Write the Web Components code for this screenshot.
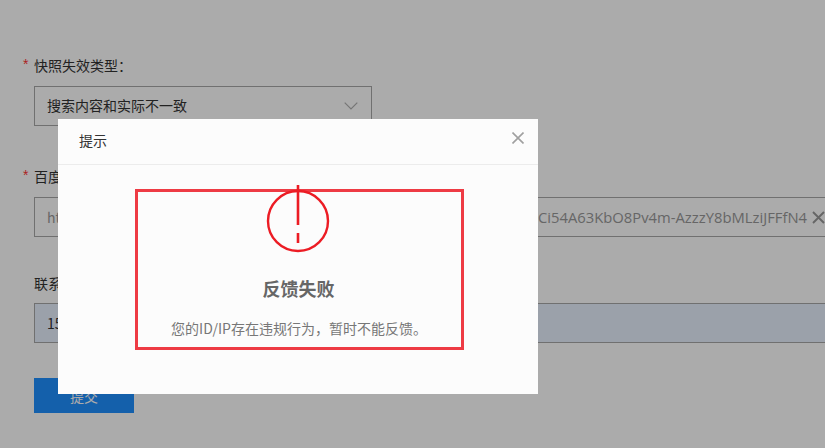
<!DOCTYPE html>
<html lang="zh-CN">
<head>
<meta charset="utf-8">
<title>反馈失败</title>
<style>
html, body { margin: 0; height: 100%; overflow: hidden; background: #fff; }
body { font: 14px/20px "Noto Sans CJK SC", "Noto Sans", sans-serif; color: #333; }
</style>
</head>
<body>
<feedback-form>
    <form-field label="快照失效类型：" required style="--gap-top: 55px">
        <select-box>搜索内容和实际不一致</select-box>
    </form-field>
    <form-field label="百度快照链接：" required style="--gap-top: 40px">
        <url-box></url-box>
    </form-field>
    <form-field label="联系方式：" style="--gap-top: 36px; --gap-label: 10px">
        <text-box value="15"></text-box>
    </form-field>
    <submit-button>提交</submit-button>
</feedback-form>
<modal-dialog heading="提示">
    <failure-notice title-text="反馈失败" message="您的ID/IP存在违规行为，暂时不能反馈。"></failure-notice>
</modal-dialog>

<script>
function shadow(el, html) {
    el.attachShadow({mode: 'open'}).innerHTML = html
}

class FeedbackForm extends HTMLElement {
    constructor() {
        super()
        shadow(this, `
<style>
:host { display: block; padding-left: 34px; }
</style>
<slot></slot>`)
    }
}

class FormField extends HTMLElement {
    connectedCallback() {
        if (this.shadowRoot) return
        let star = this.hasAttribute('required') ? '<span class="star">*</span>' : ''
        shadow(this, `
<style>
:host { display: block; padding-top: var(--gap-top, 40px); }
.label { position: relative; height: 20px; line-height: 20px; margin-bottom: var(--gap-label, 11px); color: #333; }
.star { position: absolute; left: -11px; top: -1px; color: #f33; font-family: "Liberation Sans", sans-serif; }
</style>
<div class="label">${star}${this.getAttribute('label')}</div>
<slot></slot>`)
    }
}

class SelectBox extends HTMLElement {
    constructor() {
        super()
        shadow(this, `
<style>
:host { display: flex; align-items: center; justify-content: space-between; box-sizing: border-box;
    width: 338px; height: 40px; padding: 0 13px 2px 12px; border: 1px solid #a8a8a8; color: #333; }
svg { display: block; margin-top: 2px; }
</style>
<slot></slot>
<svg width="14" height="8" viewBox="0 0 14 8" fill="none" stroke="#b0b0b0" stroke-width="1.2"><path d="M.7.6 7 7 13.3.6"/></svg>`)
    }
}

class UrlBox extends HTMLElement {
    constructor() {
        super()
        shadow(this, `
<style>
:host { display: flex; align-items: center; box-sizing: border-box; width: 800px; height: 40px;
    padding: 0 0 0 12px; border: 1px solid #a8a8a8; color: #999; white-space: nowrap; }
.end { margin-left: auto; margin-right: 5px; font-family: "Open Sans", sans-serif; font-size: 14.8px; }
svg { display: block; flex: none; margin-right: 8px; }
</style>
<span>https://www.baidu.com/link?url=</span>
<span class="end">Ci54A63KbO8Pv4m-AzzzY8bMLziJFFfN4</span>
<svg width="13" height="13" viewBox="0 0 13 13" stroke="#999" stroke-width="1.9"><path d="M1 1l11 11M12 1 1 12"/></svg>`)
    }
}

class TextBox extends HTMLElement {
    connectedCallback() {
        if (this.shadowRoot) return
        shadow(this, `
<style>
:host { display: flex; align-items: center; box-sizing: border-box; width: 800px; height: 40px;
    padding-left: 12px; border: 1px solid #a8a8a8; background: #e8f0fe; color: #333; }
</style>
${this.getAttribute('value')}`)
    }
}

class SubmitButton extends HTMLElement {
    constructor() {
        super()
        shadow(this, `
<style>
:host { display: flex; align-items: center; justify-content: center; width: 100px; height: 35px;
    margin-top: 35px; background: #1f8fff; color: #fff; }
</style>
<slot></slot>`)
    }
}

class ModalDialog extends HTMLElement {
    connectedCallback() {
        if (this.shadowRoot) return
        shadow(this, `
<style>
:host { position: fixed; inset: 0; display: block; background: rgba(0, 0, 0, .33); }
.dialog { position: absolute; left: 58px; top: 119px; width: 480px; height: 275px; background: #fcfcfc; }
header { display: flex; align-items: center; justify-content: space-between; box-sizing: border-box;
    height: 46px; padding: 0 14px 4px 21px; border-bottom: 1px solid #ececec; color: #333; }
svg { display: block; margin-top: -3px; }
.body { padding: 24px 0 0 77px; }
</style>
<div class="dialog">
    <header>
        <span>${this.getAttribute('heading')}</span>
        <svg width="12" height="12" viewBox="0 0 12 12" stroke="#a0a0a0" stroke-width="1.6"><path d="M.5.5l11 11M11.5.5l-11 11"/></svg>
    </header>
    <div class="body"><slot></slot></div>
</div>`)
    }
}

class FailureNotice extends HTMLElement {
    connectedCallback() {
        if (this.shadowRoot) return
        shadow(this, `
<style>
:host { display: flex; flex-direction: column; align-items: center; box-sizing: border-box;
    width: 329px; height: 161px; border: 3px solid #ee3b44; }
svg { display: block; flex: none; margin: -7px 3px 0 0; }
h2 { margin: 21px 2px 0 0; font-size: 18px; line-height: 28px; font-weight: 700; color: #666; }
p { margin: 16px 1px 0 0; font-size: 14px; line-height: 20px; color: #777; }
</style>
<svg width="64" height="68" viewBox="0 0 64 68" fill="none" stroke="#ec1c24" stroke-width="2.4">
    <circle cx="32" cy="36" r="30"/>
    <path d="M32 0v40M32 48v10" stroke-width="2.6"/>
</svg>
<h2>${this.getAttribute('title-text')}</h2>
<p>${this.getAttribute('message')}</p>`)
    }
}

customElements.define('feedback-form', FeedbackForm)
customElements.define('form-field', FormField)
customElements.define('select-box', SelectBox)
customElements.define('url-box', UrlBox)
customElements.define('text-box', TextBox)
customElements.define('submit-button', SubmitButton)
customElements.define('modal-dialog', ModalDialog)
customElements.define('failure-notice', FailureNotice)
</script>
</body>
</html>
